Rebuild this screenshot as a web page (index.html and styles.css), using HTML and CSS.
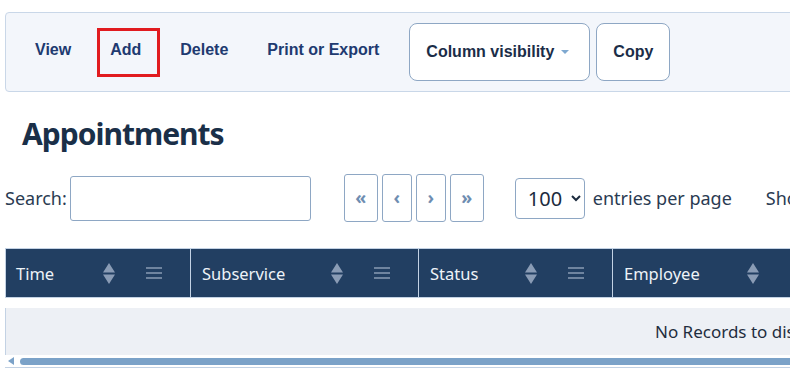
FILE: index.html
```html
<!DOCTYPE html>
<html>
    <head>
        <meta charset="utf-8">
        <meta name="viewport" content="width=device-width, initial-scale=1">
        <title>Appointments</title>
        <link rel="stylesheet" href="styles.css">
    </head>

    <body>
        <div class="page">
            <!-- toolbar -->
            <div class="toolbar">
                <a href="#" class="tool-link">View</a>
                <a href="#" class="tool-link active">Add</a>
                <a href="#" class="tool-link">Delete</a>
                <a href="#" class="tool-link">Print or Export</a>
                <button class="tool-btn">Column visibility <span class="caret"></span></button>
                <button class="tool-btn">Copy</button>
            </div>

            <h1 class="title">Appointments</h1>

            <!-- search, paging, length -->
            <div class="controls">
                <label class="search">Search:<input type="text" class="search-input"></label>
                <div class="pager">
                    <button class="page-btn wide">&laquo;</button>
                    <button class="page-btn">&lsaquo;</button>
                    <button class="page-btn">&rsaquo;</button>
                    <button class="page-btn wide">&raquo;</button>
                </div>
                <div class="length">
                    <select class="length-select">
                        <option>10</option>
                        <option>25</option>
                        <option selected>100</option>
                    </select>
                    <span>entries per page</span>
                </div>
                <div class="info">Showing 0 to 0 of 0 entries</div>
            </div>

            <!-- table -->
            <div class="grid">
                <div class="grid-head">
                    <div class="col c-time"><span>Time</span><span class="sort"><svg width="12" height="21" viewBox="0 0 12 21"><path d="M6 0 L12 9.5 L0 9.5 Z M0 11.5 L12 11.5 L6 21 Z" fill="#8a9cb5"/></svg></span><span class="menu"></span></div>
                    <div class="col c-sub"><span>Subservice</span><span class="sort"><svg width="12" height="21" viewBox="0 0 12 21"><path d="M6 0 L12 9.5 L0 9.5 Z M0 11.5 L12 11.5 L6 21 Z" fill="#8a9cb5"/></svg></span><span class="menu"></span></div>
                    <div class="col c-status"><span>Status</span><span class="sort"><svg width="12" height="21" viewBox="0 0 12 21"><path d="M6 0 L12 9.5 L0 9.5 Z M0 11.5 L12 11.5 L6 21 Z" fill="#8a9cb5"/></svg></span><span class="menu"></span></div>
                    <div class="col c-emp"><span>Employee</span><span class="sort"><svg width="12" height="21" viewBox="0 0 12 21"><path d="M6 0 L12 9.5 L0 9.5 Z M0 11.5 L12 11.5 L6 21 Z" fill="#8a9cb5"/></svg></span><span class="menu"></span></div>
                    <div class="col c-cust"><span>Customer</span><span class="sort"><svg width="12" height="21" viewBox="0 0 12 21"><path d="M6 0 L12 9.5 L0 9.5 Z M0 11.5 L12 11.5 L6 21 Z" fill="#8a9cb5"/></svg></span><span class="menu"></span></div>
                    <div class="col c-notes"><span>Notes</span><span class="sort"><svg width="12" height="21" viewBox="0 0 12 21"><path d="M6 0 L12 9.5 L0 9.5 Z M0 11.5 L12 11.5 L6 21 Z" fill="#8a9cb5"/></svg></span><span class="menu"></span></div>
                </div>
                <div class="grid-body">No Records to display</div>
                <div class="hscroll">
                    <span class="hscroll-arrow"></span>
                    <span class="hscroll-thumb"></span>
                </div>
            </div>
        </div>
    </body>
</html>
```

FILE: styles.css
```css
* {box-sizing: border-box}

body {
  margin: 0;
  overflow: hidden;
  background: #fff;
  font-family: "Noto Sans", "Open Sans", sans-serif;
  color: #2a3b52;
}

.page {
  padding: 12px 0 0 5px;
  width: 1500px;
}

/* toolbar */
.toolbar {
  display: flex;
  align-items: center;
  width: 1480px;
  height: 80px;
  padding: 10px 0 10px 29px;
  background: #f3f6fb;
  border: 1px solid #c9d7e8;
  border-radius: 4px;
}

.tool-link {
  position: relative;
  margin: 0 39px 4px 0;
  font-family: "Liberation Sans", Arial, sans-serif;
  font-weight: bold;
  font-size: 16px;
  line-height: 18px;
  color: #203a70;
  text-decoration: none;
}

.tool-link:nth-child(4) {
  margin-right: 30px;
}

/* red highlight round the active link */
.tool-link.active::after {
  content: "";
  position: absolute;
  left: -13px;
  right: -19px;
  top: -13px;
  bottom: -18px;
  border: 3px solid #e11b1f;
}

.tool-btn {
  display: flex;
  align-items: center;
  height: 58px;
  padding: 0 16px;
  margin-right: 6px;
  background: #fff;
  border: 1px solid #8ea7c4;
  border-radius: 8px;
  font-family: "Liberation Sans", Arial, sans-serif;
  font-weight: bold;
  font-size: 16px;
  color: #1b2d48;
}

.tool-btn:first-of-type {
  padding-right: 20px;
}

.caret {
  width: 0;
  height: 0;
  margin-left: 7px;
  border-left: 4px solid transparent;
  border-right: 4px solid transparent;
  border-top: 4px solid #7ea8d0;
}

/* heading */
.title {
  margin: 22px 0 0 17px;
  font-size: 30px;
  line-height: 40px;
  letter-spacing: -1px;
  font-weight: bold;
  color: #1a2f48;
}

/* controls row */
.controls {
  display: flex;
  align-items: center;
  margin-top: 20px;
  font-size: 18px;
}

.search {
  display: flex;
  align-items: center;
  gap: 3px;
}

.search-input {
  width: 241px;
  height: 45px;
  border: 1px solid #8ea7c4;
  border-radius: 3px;
}

.pager {
  display: flex;
  gap: 4px;
  margin-left: 33px;
}

.page-btn {
  width: 30px;
  height: 48px;
  padding: 0 0 2px;
  background: #fff;
  border: 1px solid #8ea7c4;
  border-radius: 3px;
  font-family: "Noto Sans", sans-serif;
  font-weight: bold;
  font-size: 18px;
  color: #6e8db1;
}

.page-btn.wide {
  width: 34px;
}

.length {
  display: flex;
  align-items: center;
  gap: 8px;
  margin-left: 31px;
}

.length-select {
  width: 70px;
  height: 41px;
  padding-left: 8px;
  background: #fff;
  border: 1px solid #8ea7c4;
  border-radius: 4px;
  font-family: "Noto Sans", sans-serif;
  font-size: 20px;
  color: #1c2b3e;
}

.info {
  margin-left: 34px;
}

/* table */
.grid {
  margin-top: 26px;
  width: 1475px;
}

.grid-head {
  display: flex;
  height: 50px;
  background: #223f62;
  border: 1px solid #c3d2e4;
  border-right: none;
}

.col {
  display: flex;
  align-items: center;
  padding: 0 28px 0 11px;
  border-right: 1px solid #c3d2e4;
  color: #eef3f8;
  font-size: 16.5px;
}

.col span:first-child {
  flex: 1;
}

.c-time {width: 185px; padding-left: 10px}
.c-sub {width: 228px}
.c-status {width: 194px}
.c-emp {width: 222px}
.c-cust {width: 320px}
.c-notes {flex: 1}

.sort {
  display: flex;
  margin-right: 31px;
}

.menu {
  width: 16px;
  height: 12px;
  border-top: 2px solid #6f849f;
  border-bottom: 2px solid #6f849f;
  background: linear-gradient(#6f849f, #6f849f) center / 100% 2px no-repeat;
}

.grid-body {
  margin-top: 10px;
  height: 47px;
  line-height: 47px;
  padding-left: 649px;
  background: #edf0f5;
  border-left: 1px solid #c3d2e4;
  font-size: 17px;
  color: #1f2d3e;
}

.hscroll {
  display: flex;
  align-items: center;
  gap: 6px;
  height: 13px;
  padding: 3px 0 3px 3px;
  border-bottom: 1px solid #c3d2e4;
}

.hscroll-arrow {
  width: 0;
  height: 0;
  border-top: 4px solid transparent;
  border-bottom: 4px solid transparent;
  border-right: 6px solid #7ba2c8;
}

.hscroll-thumb {
  flex: 1;
  height: 7px;
  background: #7ba2c8;
  border-radius: 4px;
}
```
